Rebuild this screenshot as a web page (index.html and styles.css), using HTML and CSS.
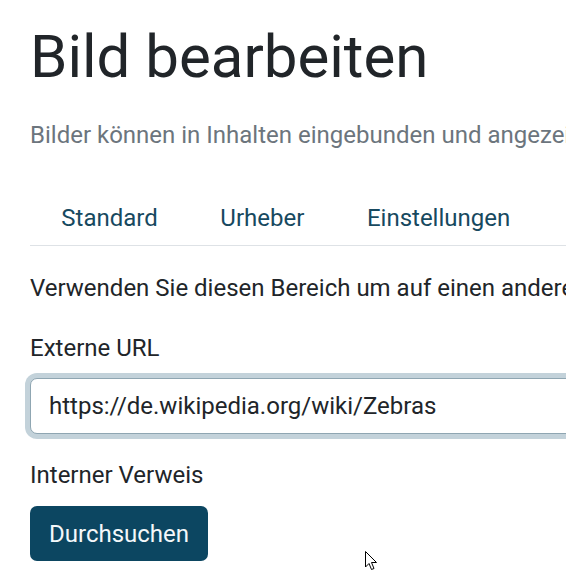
FILE: index.html
```html
<!DOCTYPE html>
<html lang="de">
<head>
    <meta charset="UTF-8">
    <meta name="viewport" content="width=device-width, initial-scale=1.0">
    <title>Bild bearbeiten</title>
    <link rel="stylesheet" href="styles.css">
</head>
<body>
    <div class="page">
        <h1 class="title">Bild bearbeiten</h1>
        <p class="lead">Bilder können in Inhalten eingebunden und angezeigt werden.</p>

        <ul class="tabs">
            <li><a href="#" class="tab">Standard</a></li>
            <li><a href="#" class="tab">Urheber</a></li>
            <li><a href="#" class="tab">Einstellungen</a></li>
        </ul>

        <p class="info">Verwenden Sie diesen Bereich um auf einen anderen Inhalt zu verweisen.</p>

        <div class="field">
            <label class="label" for="url">Externe URL</label>
            <input class="input focused" id="url" type="text" value="https://de.wikipedia.org/wiki/Zebras">
        </div>

        <div class="field">
            <label class="label">Interner Verweis</label>
            <button class="btn" type="button">Durchsuchen</button>
        </div>
    </div>

    <!-- mauszeiger -->
    <svg class="cursor" width="13" height="20" viewBox="0 0 13 20">
        <path d="M0.5 0.5 L0.5 16 L4 12.5 L6.5 18.5 L9 17.5 L6.5 11.5 L11.5 11.5 Z" fill="#fff" stroke="#000" stroke-width="1"/>
    </svg>
</body>
</html>
```

FILE: styles.css
```css
html, body {
    margin: 0;
    overflow: hidden;
}
body {
    background-color: white;
    color: #212529;
    font-family: Roboto, "Noto Sans", sans-serif;
    font-size: 24px;
    line-height: 28px;
    position: relative;
    height: 580px;
}
.page {
    width: 1000px;
    padding: 0 0 0 30px;
}
.title {
    font-size: 60px;
    font-weight: 400;
    line-height: 72px;
    margin: 0;
    padding-top: 21px;
}
.lead {
    color: #6c757d;
    margin: 28px 0 0 0;
    white-space: nowrap;
}
.tabs {
    list-style: none;
    display: flex;
    margin: 44px 0 0 0;
    padding: 0;
    border-bottom: 1px solid #dee2e6;
}
.tab {
    display: block;
    padding: 11px 31.3px 13px 31.3px;
    color: #17495f;
    text-decoration: none;
}
.info {
    margin: 28px 0 0 0;
    white-space: nowrap;
}
.field {
    margin-top: 32px;
}
.label {
    display: block;
    margin-bottom: 16px;
}
.input {
    box-sizing: border-box;
    width: 700px;
    height: 56px;
    padding: 0 18px;
    font-family: Roboto, "Noto Sans", sans-serif;
    font-size: 24px;
    color: #212529;
    border: 1px solid #8fa6b2;
    border-radius: 7px;
    outline: none;
}
.focused {
    box-shadow: 0 0 0 5px #c3d2da;
}
.field + .field {
    margin-top: 27px;
}
.field + .field .label {
    margin-bottom: 17px;
}
.btn {
    display: block;
    height: 55px;
    padding: 0 19px;
    background-color: #0c4661;
    color: #f4f8fa;
    border: none;
    border-radius: 7px;
    font-family: Roboto, "Noto Sans", sans-serif;
    font-size: 24px;
}
.cursor {
    position: absolute;
    left: 365px;
    top: 551px;
}
```
